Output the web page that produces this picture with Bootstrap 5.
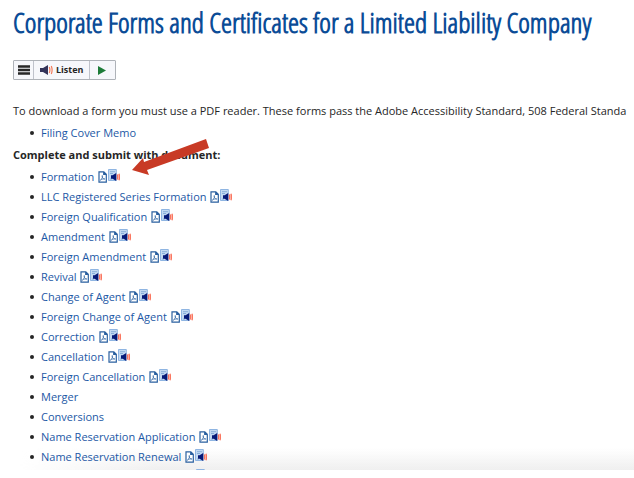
<!DOCTYPE html>
<html lang="en">
<head>
<meta charset="utf-8">
<meta name="viewport" content="width=device-width, initial-scale=1">
<title>Corporate Forms and Certificates for a Limited Liability Company</title>
<link href="https://cdn.jsdelivr.net/npm/bootstrap@5.3.0/dist/css/bootstrap.min.css" rel="stylesheet">
<style>
body{font-family:"Open Sans","Noto Sans",sans-serif;font-size:11px;line-height:20px;color:#262626;background:#fff}
.page-view{height:calc(100vh - 8px)}
.content-column{padding-left:13px}
.page-title{font-family:"Open Sans Condensed Light","Open Sans Condensed","Open Sans",sans-serif;font-size:28px;line-height:36px;font-weight:700;color:#0b4c97;padding-top:4px;margin-bottom:20px}
.listen-bar{height:20px;border:1px solid #aeb2b8;border-radius:1px;background:#f6f7fb;margin-bottom:21px}
.listen-bar button{border:0;border-right:1px solid #bfc2cb;background:none;padding:0 6px;font-size:9px;font-weight:700;color:#252525;line-height:18px}
.listen-bar button:first-child{padding:0 3px 0 4px}
.listen-bar button:last-child{border-right:0;padding:0 9px 0 8px}
.listen-label{gap:3px}
.forms-list{padding-left:28px;list-style:none;margin:2px 0}
.forms-list li::before{content:"";display:inline-block;width:4px;height:4px;border-radius:50%;background:#262626;margin:0 7px 0 -11px;vertical-align:2px}
.forms-list .cut-row::before{visibility:hidden}
.forms-list a{color:#1c58a5;text-decoration:none}
.doc-icons{display:inline-flex;align-items:flex-end;gap:1px;height:14px;margin-left:1px;vertical-align:-2px}
.forms-list .cut-row{padding-left:144px}
.bottom-fade{z-index:-1;height:22px;background:linear-gradient(#fff0,#e7e7e7aa);-webkit-mask-image:linear-gradient(90deg,transparent 20px,#000 160px);mask-image:linear-gradient(90deg,transparent 20px,#000 160px)}
.pointer{left:131px;top:138px}
</style>
</head>
<body>
<svg class="d-none" aria-hidden="true">
<symbol id="pdf" viewBox="0 0 9 12"><path d="M1 .8h4.8L8.3 3.3v7.9H1zM5.7.9v2.6h2.5" fill="#fff" stroke="#2a60a0" stroke-width="1.2"/><path d="M2.3 9.2C4 8 4.8 6 4.5 4.8c-.5-.8-.8.2 0 1.7.5 1 1.3 1.6 2.4 1.5-1.5-.3-3.1.1-4.6 1.2" fill="none" stroke="#2a60a0" stroke-width=".7"/></symbol>
<symbol id="read" viewBox="0 0 12 14"><path d="M.5.5h7.8v11H.5z" fill="#c4daf2" stroke="#8fb5e2"/><path d="M2 2.7h5M2 4.5h3M2 10h2" stroke="#78a3d3" stroke-width=".8"/><path d="M3 6.3h1.6L8.2 4v8L4.6 9.7H3z" fill="#061a78"/><path d="M9.2 5.6q1 2.4 0 4.8M10.9 4.8q1.2 3.2 0 6.4" fill="none" stroke="#fa7660" stroke-width="1.4"/></symbol>
</svg>
<main class="page-view position-relative overflow-hidden">
<div class="content-column">
<h1 class="page-title text-nowrap">Corporate Forms and Certificates for a Limited Liability Company</h1>
<div class="listen-bar d-inline-flex align-items-stretch">
<button type="button" aria-label="Menu"><svg class="d-block" width="12" height="10"><path d="M0 1.5h12M0 5h12M0 8.5h12" stroke="#272727" stroke-width="2.6"/></svg></button>
<button type="button" class="listen-label d-flex align-items-center"><svg width="13" height="10" viewBox="0 0 13 10"><path d="M0 3h3l5-3v10L3 7H0z" fill="#34345a"/><path d="M9.3 2q1.2 3 0 6M11.3 1q1.6 4 0 8" fill="none" stroke="#f47c5b" stroke-width="1.2"/></svg>Listen</button>
<button type="button" aria-label="Play"><svg class="d-block" width="8" height="9"><path d="M0 0l8 4.5L0 9z" fill="#1d7b38"/></svg></button>
</div>
<p class="mb-0 text-nowrap">To download a form you must use a PDF reader. These forms pass the Adobe Accessibility Standard, 508 Federal Standa</p>
<ul class="forms-list"><li><a href="#">Filing Cover Memo</a></li></ul>
<p class="fw-bold mb-0">Complete and submit with document:</p>
<ul class="forms-list" id="forms"></ul>
</div>
<svg class="pointer position-absolute" width="79" height="38" aria-hidden="true"><path d="M1 32L12 20l1 4L75 1l3 9L16 32l2 5z" fill="#c83a25"/></svg>
<div class="bottom-fade position-absolute bottom-0 start-0 end-0"></div>
</main>
<script>
const icons='<span class="doc-icons"><svg width="9" height="12"><use href="#pdf"/></svg><svg width="12" height="14"><use href="#read"/></svg></span>';
const plain=['Merger','Conversions'];
document.getElementById('forms').innerHTML=['Formation','LLC Registered Series Formation','Foreign Qualification','Amendment','Foreign Amendment','Revival','Change of Agent','Foreign Change of Agent','Correction','Cancellation','Foreign Cancellation','Merger','Conversions','Name Reservation Application','Name Reservation Renewal'].map(n=>`<li><a href="#">${n}${plain.includes(n)?'':' '+icons}</a></li>`).join('')+`<li class="cut-row">${icons}</li>`;
</script>
<script src="https://cdn.jsdelivr.net/npm/bootstrap@5.3.0/dist/js/bootstrap.bundle.min.js"></script>
</body>
</html>
